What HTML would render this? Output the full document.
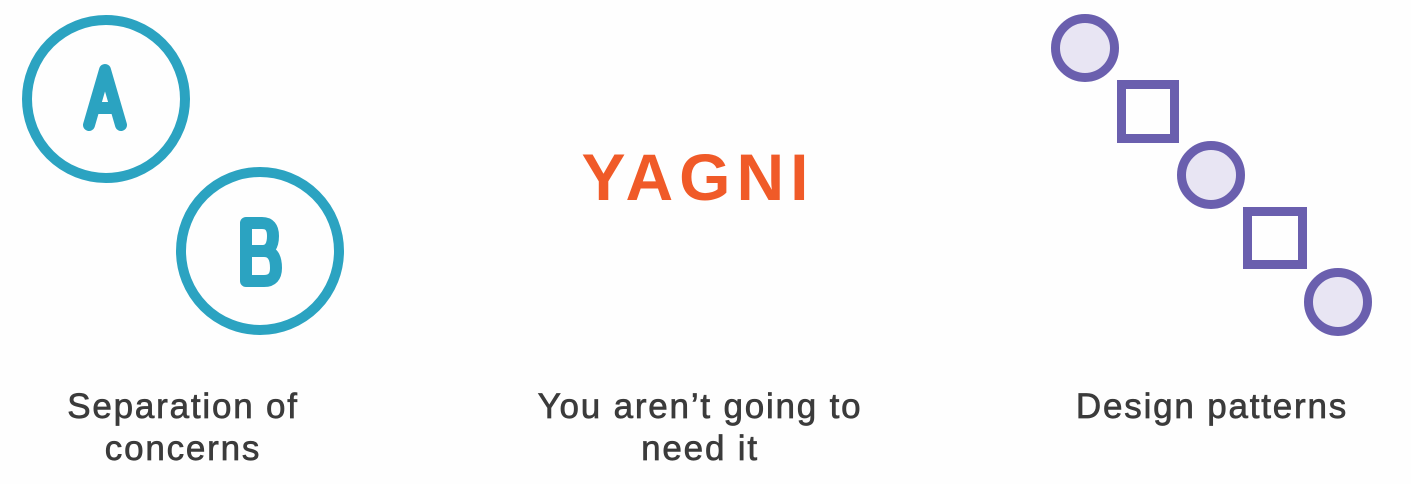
<!DOCTYPE html>
<html><head><meta charset="utf-8"><style>
html,body{margin:0;padding:0;background:#fefefe;width:1411px;height:484px;overflow:hidden;position:relative}
svg{position:absolute;left:0;top:0}
.lbl{position:absolute;font-family:"Liberation Sans",sans-serif;font-size:35px;color:#3b3b3b;text-align:center;line-height:42px;width:500px;letter-spacing:1.8px;-webkit-text-stroke:0.7px #3b3b3b}
</style></head><body>
<svg width="1411" height="484" viewBox="0 0 1411 484">
<g fill="none" stroke="#2ba3c1" stroke-width="10">
<circle cx="106" cy="99" r="79"/>
<circle cx="260" cy="251" r="79"/>
</g>
<g fill="none" stroke="#2ba3c1" stroke-width="12" stroke-linecap="round" stroke-linejoin="round">
<path d="M89 125 L105 70 L121 125 M95 108 H115"/>
<path d="M246 223 V281 H264 Q276 281 276 268 Q276 251 264 251 H246 M246 223 H262 Q273 223 273 236 Q273 251 262 251"/>
</g>
<text x="698" y="200" font-family="Liberation Sans,sans-serif" font-weight="bold" font-size="66" fill="#f05a28" text-anchor="middle" letter-spacing="6">YAGNI</text>
<g fill="#e8e5f3" stroke="#6a5fae" stroke-width="9">
<circle cx="1085" cy="48" r="29.5"/>
<circle cx="1211" cy="175" r="29.5"/>
<circle cx="1338" cy="302" r="29.5"/>
</g>
<g fill="none" stroke="#6a5fae" stroke-width="9">
<rect x="1121.5" y="84.5" width="53" height="54"/>
<rect x="1247.5" y="211.5" width="55" height="53"/>
</g>
</svg>
<div class="lbl" style="left:-67px;top:386px">Separation of<br>concerns</div>
<div class="lbl" style="left:450px;top:386px">You aren’t going to<br>need it</div>
<div class="lbl" style="left:962px;top:386px">Design patterns</div>
</body></html>
